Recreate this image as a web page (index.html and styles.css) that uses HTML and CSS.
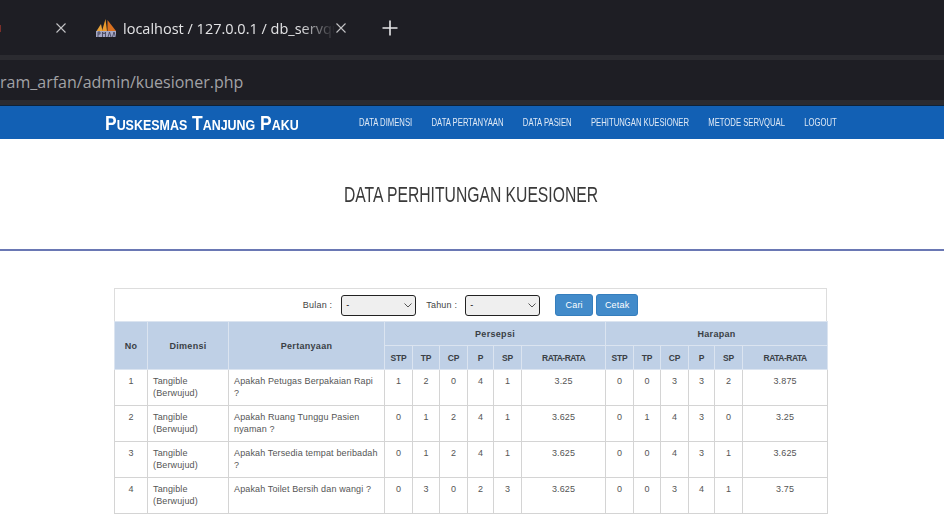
FILE: index.html
```html
<!DOCTYPE html>
<html lang="id">
<head>
    <meta charset="UTF-8">
    <meta name="viewport" content="width=device-width, initial-scale=1.0">
    <title>Data Perhitungan Kuesioner</title>
    <link rel="stylesheet" href="styles.css">
</head>
<body>
    <div class="browser">
        <div class="tabstrip">
            <span class="prev-icon"></span>
            <span class="tab-close first">
                <svg width="12" height="12" viewBox="0 0 12 12"><path d="M1.5 1.5l9 9M10.5 1.5l-9 9" stroke="#c4c4c6" stroke-width="1.1" fill="none"/></svg>
            </span>
            <svg class="favicon" width="22" height="20" viewBox="0 0 22 20">
                <path d="M1.500 13L6 6l1.500 7z" fill="#e8a33a"/>
                <path d="M7 13L10.500 1l1.500 12z" fill="#ec9a2c"/>
                <path d="M12.500 13V2l8.500 11z" fill="#d9701f"/>
                <rect x="1" y="13" width="20" height="6" fill="#a5a7c4"/>
                <path d="M3 19v-5h2v2H3M7.500 19v-5l1.500 2 1.500-2v5M13 19l1.500-5 1.500 5M17.500 19l1.500-5 1.500 5" stroke="#3a3a50" stroke-width=".8" fill="none"/>
            </svg>
            <span class="tab-title">localhost / 127.0.0.1 / db_servqu</span>
            <span class="tab-close second">
                <svg width="12" height="12" viewBox="0 0 12 12"><path d="M1.5 1.5l9 9M10.5 1.5l-9 9" stroke="#c4c4c6" stroke-width="1.1" fill="none"/></svg>
            </span>
            <span class="tab-new">
                <svg width="16" height="16" viewBox="0 0 16 16"><path d="M8 .5v15M.5 8h15" stroke="#e6e6e8" stroke-width="1.6" fill="none"/></svg>
            </span>
        </div>
        <div class="addressbar">ram_arfan/admin/kuesioner.php</div>
    </div>

    <nav class="navbar">
        <a class="brand"><span>Puskesmas Tanjung Paku</span></a>
        <ul class="menu">
            <li>DATA DIMENSI</li>
            <li>DATA PERTANYAAN</li>
            <li>DATA PASIEN</li>
            <li>PEHITUNGAN KUESIONER</li>
            <li>METODE SERVQUAL</li>
            <li>LOGOUT</li>
        </ul>
    </nav>

    <h2 class="title"><span>DATA PERHITUNGAN KUESIONER</span></h2>

    <div class="table-box">
        <form class="filter">
            <label>Bulan :</label>
            <select class="pick"><option>-</option></select>
            <label class="label-tahun">Tahun :</label>
            <select class="pick"><option>-</option></select>
            <button type="button" class="btn btn-cari">Cari</button>
            <button type="button" class="btn btn-cetak">Cetak</button>
        </form>
        <table class="data">
            <colgroup>
                <col class="c33"><col class="c81"><col class="c156">
                <col class="c28"><col class="c27"><col class="c28"><col class="c26"><col class="c28"><col class="c84">
                <col class="c28"><col class="c27"><col class="c28"><col class="c26"><col class="c28"><col class="c85">
            </colgroup>
            <thead>
                <tr>
                    <th rowspan="2">No</th>
                    <th rowspan="2">Dimensi</th>
                    <th rowspan="2">Pertanyaan</th>
                    <th colspan="6">Persepsi</th>
                    <th colspan="6">Harapan</th>
                </tr>
                <tr class="sub">
                    <th>STP</th><th>TP</th><th>CP</th><th>P</th><th>SP</th><th class="rata">RATA-RATA</th>
                    <th>STP</th><th>TP</th><th>CP</th><th>P</th><th>SP</th><th class="rata">RATA-RATA</th>
                </tr>
            </thead>
            <tbody>
                <tr>
                    <td>1</td><td class="left">Tangible (Berwujud)</td><td class="left">Apakah Petugas Berpakaian Rapi ?</td>
                    <td>1</td><td>2</td><td>0</td><td>4</td><td>1</td><td>3.25</td>
                    <td>0</td><td>0</td><td>3</td><td>3</td><td>2</td><td>3.875</td>
                </tr>
                <tr>
                    <td>2</td><td class="left">Tangible (Berwujud)</td><td class="left">Apakah Ruang Tunggu Pasien nyaman ?</td>
                    <td>0</td><td>1</td><td>2</td><td>4</td><td>1</td><td>3.625</td>
                    <td>0</td><td>1</td><td>4</td><td>3</td><td>0</td><td>3.25</td>
                </tr>
                <tr>
                    <td>3</td><td class="left">Tangible (Berwujud)</td><td class="left">Apakah Tersedia tempat beribadah ?</td>
                    <td>0</td><td>1</td><td>2</td><td>4</td><td>1</td><td>3.625</td>
                    <td>0</td><td>0</td><td>4</td><td>3</td><td>1</td><td>3.625</td>
                </tr>
                <tr>
                    <td>4</td><td class="left">Tangible (Berwujud)</td><td class="left">Apakah Toilet Bersih dan wangi ?</td>
                    <td>0</td><td>3</td><td>0</td><td>2</td><td>3</td><td>3.625</td>
                    <td>0</td><td>0</td><td>3</td><td>4</td><td>1</td><td>3.75</td>
                </tr>
            </tbody>
        </table>
    </div>
</body>
</html>
```

FILE: styles.css
```css
html, body {
    margin: 0;
    padding: 0;
    height: 514px;
    overflow: hidden;
}
body {
    font-family: "Liberation Sans", Arial, sans-serif;
    background-color: #fff;
    color: #333;
}

/* browser chrome */
.browser {
    background-color: #1e1e24;
}
.tabstrip {
    position: relative;
    display: flex;
    align-items: center;
    height: 55px;
}
.prev-icon {
    position: absolute;
    left: 0;
    top: 25px;
    width: 1px;
    height: 7px;
    background-color: #7a2f2a;
}
.tab-close {
    display: flex;
}
.tab-close.first {
    margin-left: 55px;
}
.favicon {
    margin-left: 28px;
}
.tab-title {
    width: 221px;
    margin: 0 -8px 0 6px;
    padding-top: 2px;
    white-space: nowrap;
    font-family: "Open Sans", sans-serif;
    font-size: 14.5px;
    color: #e3e3e5;
    -webkit-mask-image: linear-gradient(to right, #000 80%, transparent 96%);
    mask-image: linear-gradient(to right, #000 80%, transparent 96%);
}
.tab-close.second {
    margin-left: -1px;
}
.tab-new {
    display: flex;
    margin-left: 35px;
}
.addressbar {
    height: 40px;
    line-height: 44px;
    border-top: 5px solid #2b2b30;
    border-bottom: 5px solid #2b2b30;
    font-family: "Open Sans", sans-serif;
    font-size: 16px;
    color: #a2a2a6;
    white-space: nowrap;
}

/* site nav */
.navbar {
    display: flex;
    align-items: center;
    height: 34px;
    box-sizing: border-box;
    padding-left: 105px;
    background-color: #1260b4;
    border-top: 1px solid #0e2238;
    color: #fff;
}
.brand {
    flex: 0 0 254px;
    font-size: 21px;
    font-weight: bold;
    font-variant: small-caps;
    white-space: nowrap;
}
.brand span {
    display: inline-block;
    transform: scaleX(.83);
    transform-origin: left;
}
.menu {
    display: flex;
    gap: 27.6px;
    list-style: none;
    margin: 0;
    padding: 0 0 2px;
    font-size: 11px;
    color: #dfe9f5;
    white-space: nowrap;
    transform: scaleX(.7);
    transform-origin: left;
}

/* content */
.title {
    margin: 0;
    height: 112px;
    box-sizing: border-box;
    padding: 43px 2px 0 0;
    border-bottom: 2px solid #6a78b4;
    text-align: center;
    font-size: 21.5px;
    font-weight: normal;
    color: #3a3a3a;
    line-height: 26px;
}
.title span {
    display: inline-block;
    transform: scaleX(.73);
}
.table-box {
    width: 713px;
    margin: 37px 0 0 114px;
}
.filter {
    display: flex;
    align-items: center;
    justify-content: center;
    height: 33px;
    box-sizing: border-box;
    border: 1px solid #ddd;
    border-bottom: 0;
    font-size: 9px;
    letter-spacing: .2px;
    color: #444;
}
.filter label {
    margin-right: 9px;
}
.filter .label-tahun {
    margin-right: 8px;
}
.pick {
    width: 75px;
    height: 21px;
    margin-right: 10px;
    padding-left: 4px;
    font-size: 9px;
    appearance: none;
    background: #efefef url("data:image/svg+xml,%3Csvg xmlns='http://www.w3.org/2000/svg' width='8' height='5'%3E%3Cpath d='M.5.5L4 4 7.500.5' fill='none' stroke='%23555' stroke-width='1'/%3E%3C/svg%3E") no-repeat right 3px center;
    border: 1px solid #222;
    border-radius: 3px;
}
.btn {
    height: 22px;
    padding: 0;
    font-family: inherit;
    font-size: 9px;
    letter-spacing: .2px;
    color: #fff;
    background-color: #428bca;
    border: 1px solid #357ebd;
    border-radius: 3px;
}
.btn-cari {
    width: 38px;
    margin: 0 3px 0 5px;
}
.btn-cetak {
    width: 42px;
}
.data {
    width: 713px;
    table-layout: fixed;
    border-collapse: collapse;
    font-size: 9px;
}
.c26 { width: 26px; }
.c27 { width: 27px; }
.c28 { width: 28px; }
.c33 { width: 33px; }
.c81 { width: 81px; }
.c84 { width: 84px; }
.c85 { width: 85px; }
.c156 { width: 156px; }
.data th {
    height: 24px;
    box-sizing: border-box;
    padding: 0;
    background-color: #bfd0e6;
    border: 1px solid #dbe4f0;
    font-weight: bold;
    letter-spacing: .3px;
    color: #3a3f45;
}
.data .sub th {
    font-size: 8.5px;
    letter-spacing: -.1px;
}
.data .sub th.rata {
    letter-spacing: -.5px;
}
.data td {
    height: 36px;
    box-sizing: border-box;
    padding: 5px;
    vertical-align: top;
    text-align: center;
    line-height: 12px;
    letter-spacing: .13px;
    border: 1px solid #d4d4d4;
    color: #555;
}
.data td.left {
    text-align: left;
}
```
